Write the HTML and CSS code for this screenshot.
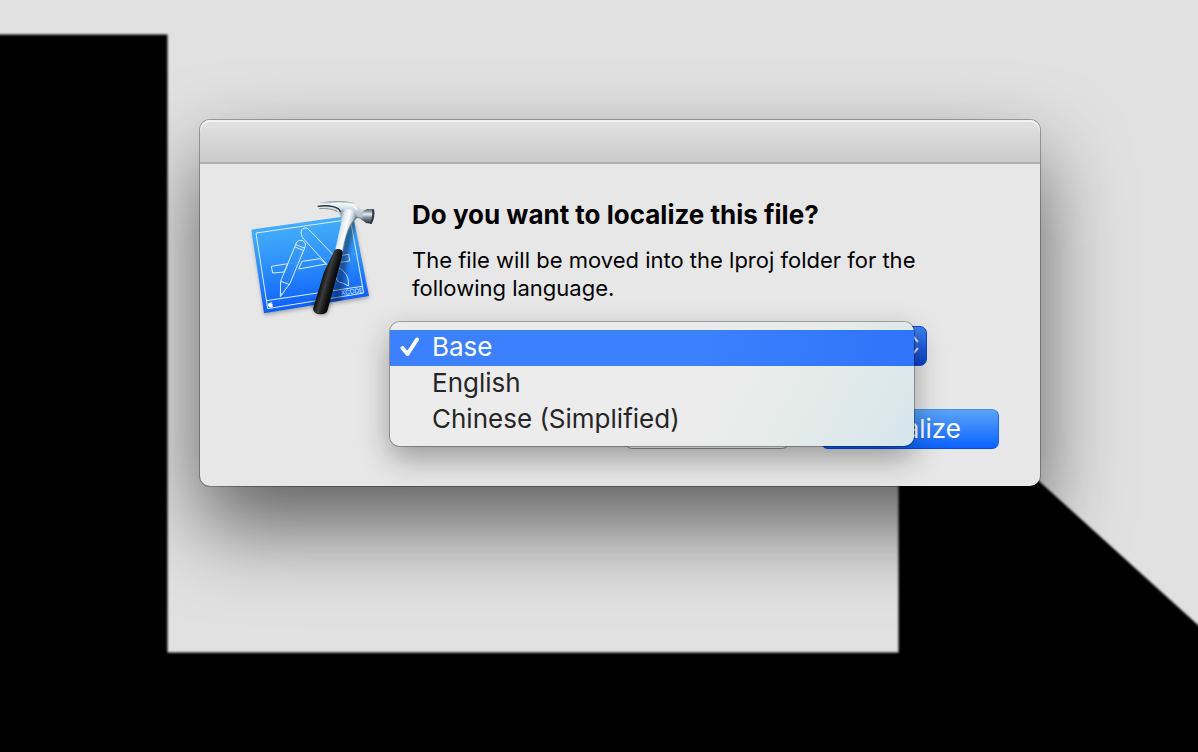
FILE: index.html
```html
<!DOCTYPE html>
<html lang="en">
<head>
<meta charset="utf-8">
<title>Localize file</title>
<link rel="stylesheet" href="styles.css">
</head>
<body>
<svg class="backdrop" viewBox="0 0 1198 752" preserveAspectRatio="xMinYMin slice" aria-hidden="true">
  <defs><filter id="soft" x="-5%" y="-5%" width="110%" height="110%"><feGaussianBlur stdDeviation="0.8"/></filter></defs>
  <path filter="url(#soft)" d="M-20 34.500H167.500V652.500H898.500V354L1240 663V790H-20Z"/>
</svg>
<main class="stage">
  <section class="dialog" role="dialog" aria-labelledby="title" aria-describedby="message">
    <header class="titlebar"></header>
    <div class="content">
      <svg class="app-icon" viewBox="0 0 450 420" aria-hidden="true">
        <defs>
          <linearGradient id="paper" x1="0" y1="0" x2="0.150" y2="1"><stop offset="0" stop-color="#4bb8fa"/><stop offset="0.500" stop-color="#2f92fa"/><stop offset="1" stop-color="#0c5dfb"/></linearGradient>
          <linearGradient id="steel" x1="0" y1="0" x2="0" y2="1"><stop offset="0" stop-color="#7d8d97"/><stop offset="0.150" stop-color="#eef4f8"/><stop offset="0.550" stop-color="#b9c9d5"/><stop offset="1" stop-color="#a4b5c2"/></linearGradient>
          <linearGradient id="neck" gradientUnits="userSpaceOnUse" x1="294" y1="110" x2="342" y2="122"><stop offset="0" stop-color="#8ea2b0"/><stop offset="0.200" stop-color="#dfe8ee"/><stop offset="0.500" stop-color="#fafdff"/><stop offset="0.750" stop-color="#b9c9d4"/><stop offset="1" stop-color="#62747f"/></linearGradient>
          <linearGradient id="grip" gradientUnits="userSpaceOnUse" x1="246" y1="262" x2="288" y2="274"><stop offset="0" stop-color="#0b0b0b"/><stop offset="0.350" stop-color="#3c3c3c"/><stop offset="0.650" stop-color="#1b1b1b"/><stop offset="1" stop-color="#000"/></linearGradient>
          <linearGradient id="face" x1="0" y1="0" x2="0" y2="1"><stop offset="0" stop-color="#46535d"/><stop offset="0.350" stop-color="#e5edf2"/><stop offset="0.600" stop-color="#7c8b96"/><stop offset="1" stop-color="#232b31"/></linearGradient>
          <clipPath id="sheet"><path d="M34 119 339 76 387 318 72 370Z"/></clipPath>
          <filter id="shade" x="-30%" y="-30%" width="160%" height="160%"><feGaussianBlur stdDeviation="7"/></filter>
        </defs>
        <path d="M38 129 339 86 387 324 74 375Z" opacity="0.300" filter="url(#shade)"/>
        <path fill="url(#paper)" d="M34 119 339 76 387 318 72 370Z"/>
        <g fill="none" stroke="#d8efff" stroke-width="3">
          <path d="M48 129 331 88 371 309 83 356Z"/>
          <path d="M79 332 366 289"/>
          <path d="M94 229 144 221 132 246 98 249ZM186 214 240 206 258 222 176 237ZM275 201 326 193 329 213 284 219"/>
          <path d="M184 133Q180 117 194 114Q201 112 208 120L287 202 292 236 263 226 188 143Q185 139 184 133Z"/>
          <path d="M170 156Q177 148 188 152Q200 158 196 169L150 280 121 320 122 274ZM165 171 192 182M168 164 195 175M122 274 150 284M121 309 127 313"/>
          <path d="M287 236Q304 232 312 246Q328 260 325 288Q311 278 296 276Q282 262 287 236Z"/>
        </g>
        <g stroke="#9bd1ff" stroke-width="1" opacity="0.500"><path d="M100 228 358 190M204 102 300 230M195 156 116 338"/></g>
        <path fill="#fff" d="M84 341Q88 337 91 340Q91 336 95 336Q96 339 93 341Q98 339 98 343Q96 348 99 350Q95 354 87 352Q83 346 84 341Z"/>
        <text class="icon-label" x="304" y="316" transform="rotate(-8 304 316)">XCODE</text>
        <g clip-path="url(#sheet)"><path d="M324 90 300 200 262 370H300L326 180 352 90Z" opacity="0.400" filter="url(#shade)"/></g>
        <path d="M222 360Q240 382 262 368L272 330 218 330Z" opacity="0.450" filter="url(#shade)"/>
        <path fill="url(#steel)" d="M232 49Q230 41 239 38Q270 30 312 34L337 37Q349 40 354 50Q359 57 368 58L382 57 381 97Q371 96 366 89Q358 79 350 82L330 90 304 86Q300 70 286 62Q276 56 262 55 246 54 232 49Z"/>
        <path fill="url(#neck)" d="M299 62Q307 84 302 104L286 178 309 183Q318 130 332 106Q341 91 353 81L340 62Q318 52 299 62Z"/>
        <path fill="none" stroke="#2c363d" stroke-width="4" d="M233 49Q258 45 279 50T301 66"/>
        <path fill="none" stroke="#59676f" stroke-width="2" d="M237 56Q272 53 291 65"/>
        <path fill="none" stroke="#fff" stroke-width="5" opacity="0.800" d="M274 41Q318 37 338 46L352 59"/>
        <path fill="none" stroke="#5f6e78" stroke-width="4" opacity="0.700" d="M309 182Q318 130 332 106T354 82Q362 82 368 91"/>
        <path fill="url(#face)" d="M370 63 382 57 401 58Q406 78 395 101L378 99 366 89Z"/>
        <path fill="#343c42" d="M396 58H402Q407 79 395 102L390 101Q399 80 396 58Z"/>
        <path fill="url(#grip)" d="M284 180Q294 174 306 181Q308 192 305 204L263 359Q261 372 243 373Q222 374 219 357L252 246Z"/>
      </svg>
      <div class="details">
        <h1 class="title" id="title">Do you want to localize this file?</h1>
        <p class="message" id="message">The file will be moved into the lproj folder for the following language.</p>
        <div class="picker">
          <select class="language" aria-label="Language">
            <option selected>Base</option><option>English</option><option>Chinese (Simplified)</option>
          </select>
          <svg class="arrows" viewBox="0 0 18 28" aria-hidden="true"><path d="M4 11 9 5 14 11M4 17 9 23 14 17"/></svg>
          <ul class="menu" role="listbox" aria-label="Language">
            <li class="item item-selected" role="option" aria-selected="true"><svg class="check" viewBox="0 0 20 20" aria-hidden="true"><path d="M2.500 11 7.500 17 17 2.500"/></svg>Base</li>
            <li class="item" role="option" aria-selected="false">English</li>
            <li class="item" role="option" aria-selected="false">Chinese (Simplified)</li>
          </ul>
        </div>
        <div class="actions">
          <button class="button" type="button">Cancel</button>
          <button class="button button-primary" type="button">Localize</button>
        </div>
      </div>
    </div>
  </section>
</main>
</body>
</html>
```
FILE: styles.css
```css
* { box-sizing: border-box; }

body {
  margin: 0;
  min-height: 100vh;
  overflow: hidden;
  background: #e1e1e1;
  font-family: Inter, "Liberation Sans", sans-serif;
  color: #000;
}

.backdrop {
  position: absolute;
  inset: 0;
  width: 100%;
  height: 100%;
}

.stage {
  position: relative;
  padding: 120px 158px 48px 200px;
}

.dialog {
  border-radius: 10px;
  background: #e7e7e7;
  box-shadow: 0 0 0 1px rgba(0, 0, 0, 0.28), 0 40px 84px rgba(0, 0, 0, 0.58);
}

.titlebar {
  height: 44px;
  border-bottom: 2px solid #b0b0b0;
  border-radius: 10px 10px 0 0;
  background: linear-gradient(#e2e2e2, #cacaca);
  box-shadow: inset 0 2px 0 #f2f2f2;
}

.content {
  display: flex;
  gap: 22px;
  padding: 26px 41px 37px 40px;
}

.app-icon {
  flex: none;
  width: 150px;
  height: 140px;
}

.icon-label {
  fill: #d8efff;
  font: 19px Inter, sans-serif;
}

.details {
  flex: 1;
  padding-top: 9px;
}

.title {
  margin: 0 0 15px;
  font-size: 26px;
  font-weight: 700;
  line-height: 32px;
}

.message {
  max-width: 530px;
  margin: 0 0 24px;
  font-size: 22px;
  line-height: 28px;
}

.picker {
  position: relative;
  max-width: 515px;
  margin-bottom: 43px;
}

.language {
  display: block;
  width: 100%;
  height: 40px;
  padding: 0 20px;
  border: 1px solid #1049cc;
  border-radius: 7px;
  appearance: none;
  background: linear-gradient(#3c82f4, #0a3fca);
  font: inherit;
  font-size: 26px;
  color: #fff;
}

.arrows {
  position: absolute;
  top: 5px;
  right: 5px;
  width: 18px;
  height: 28px;
  fill: none;
  stroke: #d5dff2;
  stroke-width: 2;
}

.menu {
  position: absolute;
  top: -4px;
  left: -22px;
  right: 13px;
  margin: 0;
  padding: 8px 0;
  border-radius: 10px;
  background: linear-gradient(120deg, #ececec 64%, #e3ebe9 80%, #d5e5ed);
  box-shadow: 0 0 0 1px rgba(0, 0, 0, 0.28), 0 12px 30px rgba(0, 0, 0, 0.34);
  font-size: 26px;
  line-height: 34px;
  list-style: none;
  color: #262626;
}

.item {
  position: relative;
  padding: 0 0 2px 42px;
}

.item-selected {
  background: linear-gradient(100deg, #3c80fe 60%, #2e74f9);
  color: #fff;
}

.check {
  position: absolute;
  top: 7px;
  left: 10px;
  width: 20px;
  height: 20px;
  fill: none;
  stroke: #fff;
  stroke-width: 4;
  stroke-linecap: round;
  stroke-linejoin: round;
}

.actions {
  display: flex;
  justify-content: flex-end;
  gap: 32px;
}

.button {
  min-width: 164px;
  height: 40px;
  padding: 0 37px;
  border: 1px solid #b4b4b4;
  border-bottom-color: #929292;
  border-radius: 7px;
  background: #fff;
  font: inherit;
  font-size: 26px;
  line-height: 36px;
  color: #262626;
}

.button-primary {
  border-color: #4490f2 #1467f5 #0048f2;
  background: linear-gradient(#5ba3f8, #0b62ff);
  color: #fff;
}
```
